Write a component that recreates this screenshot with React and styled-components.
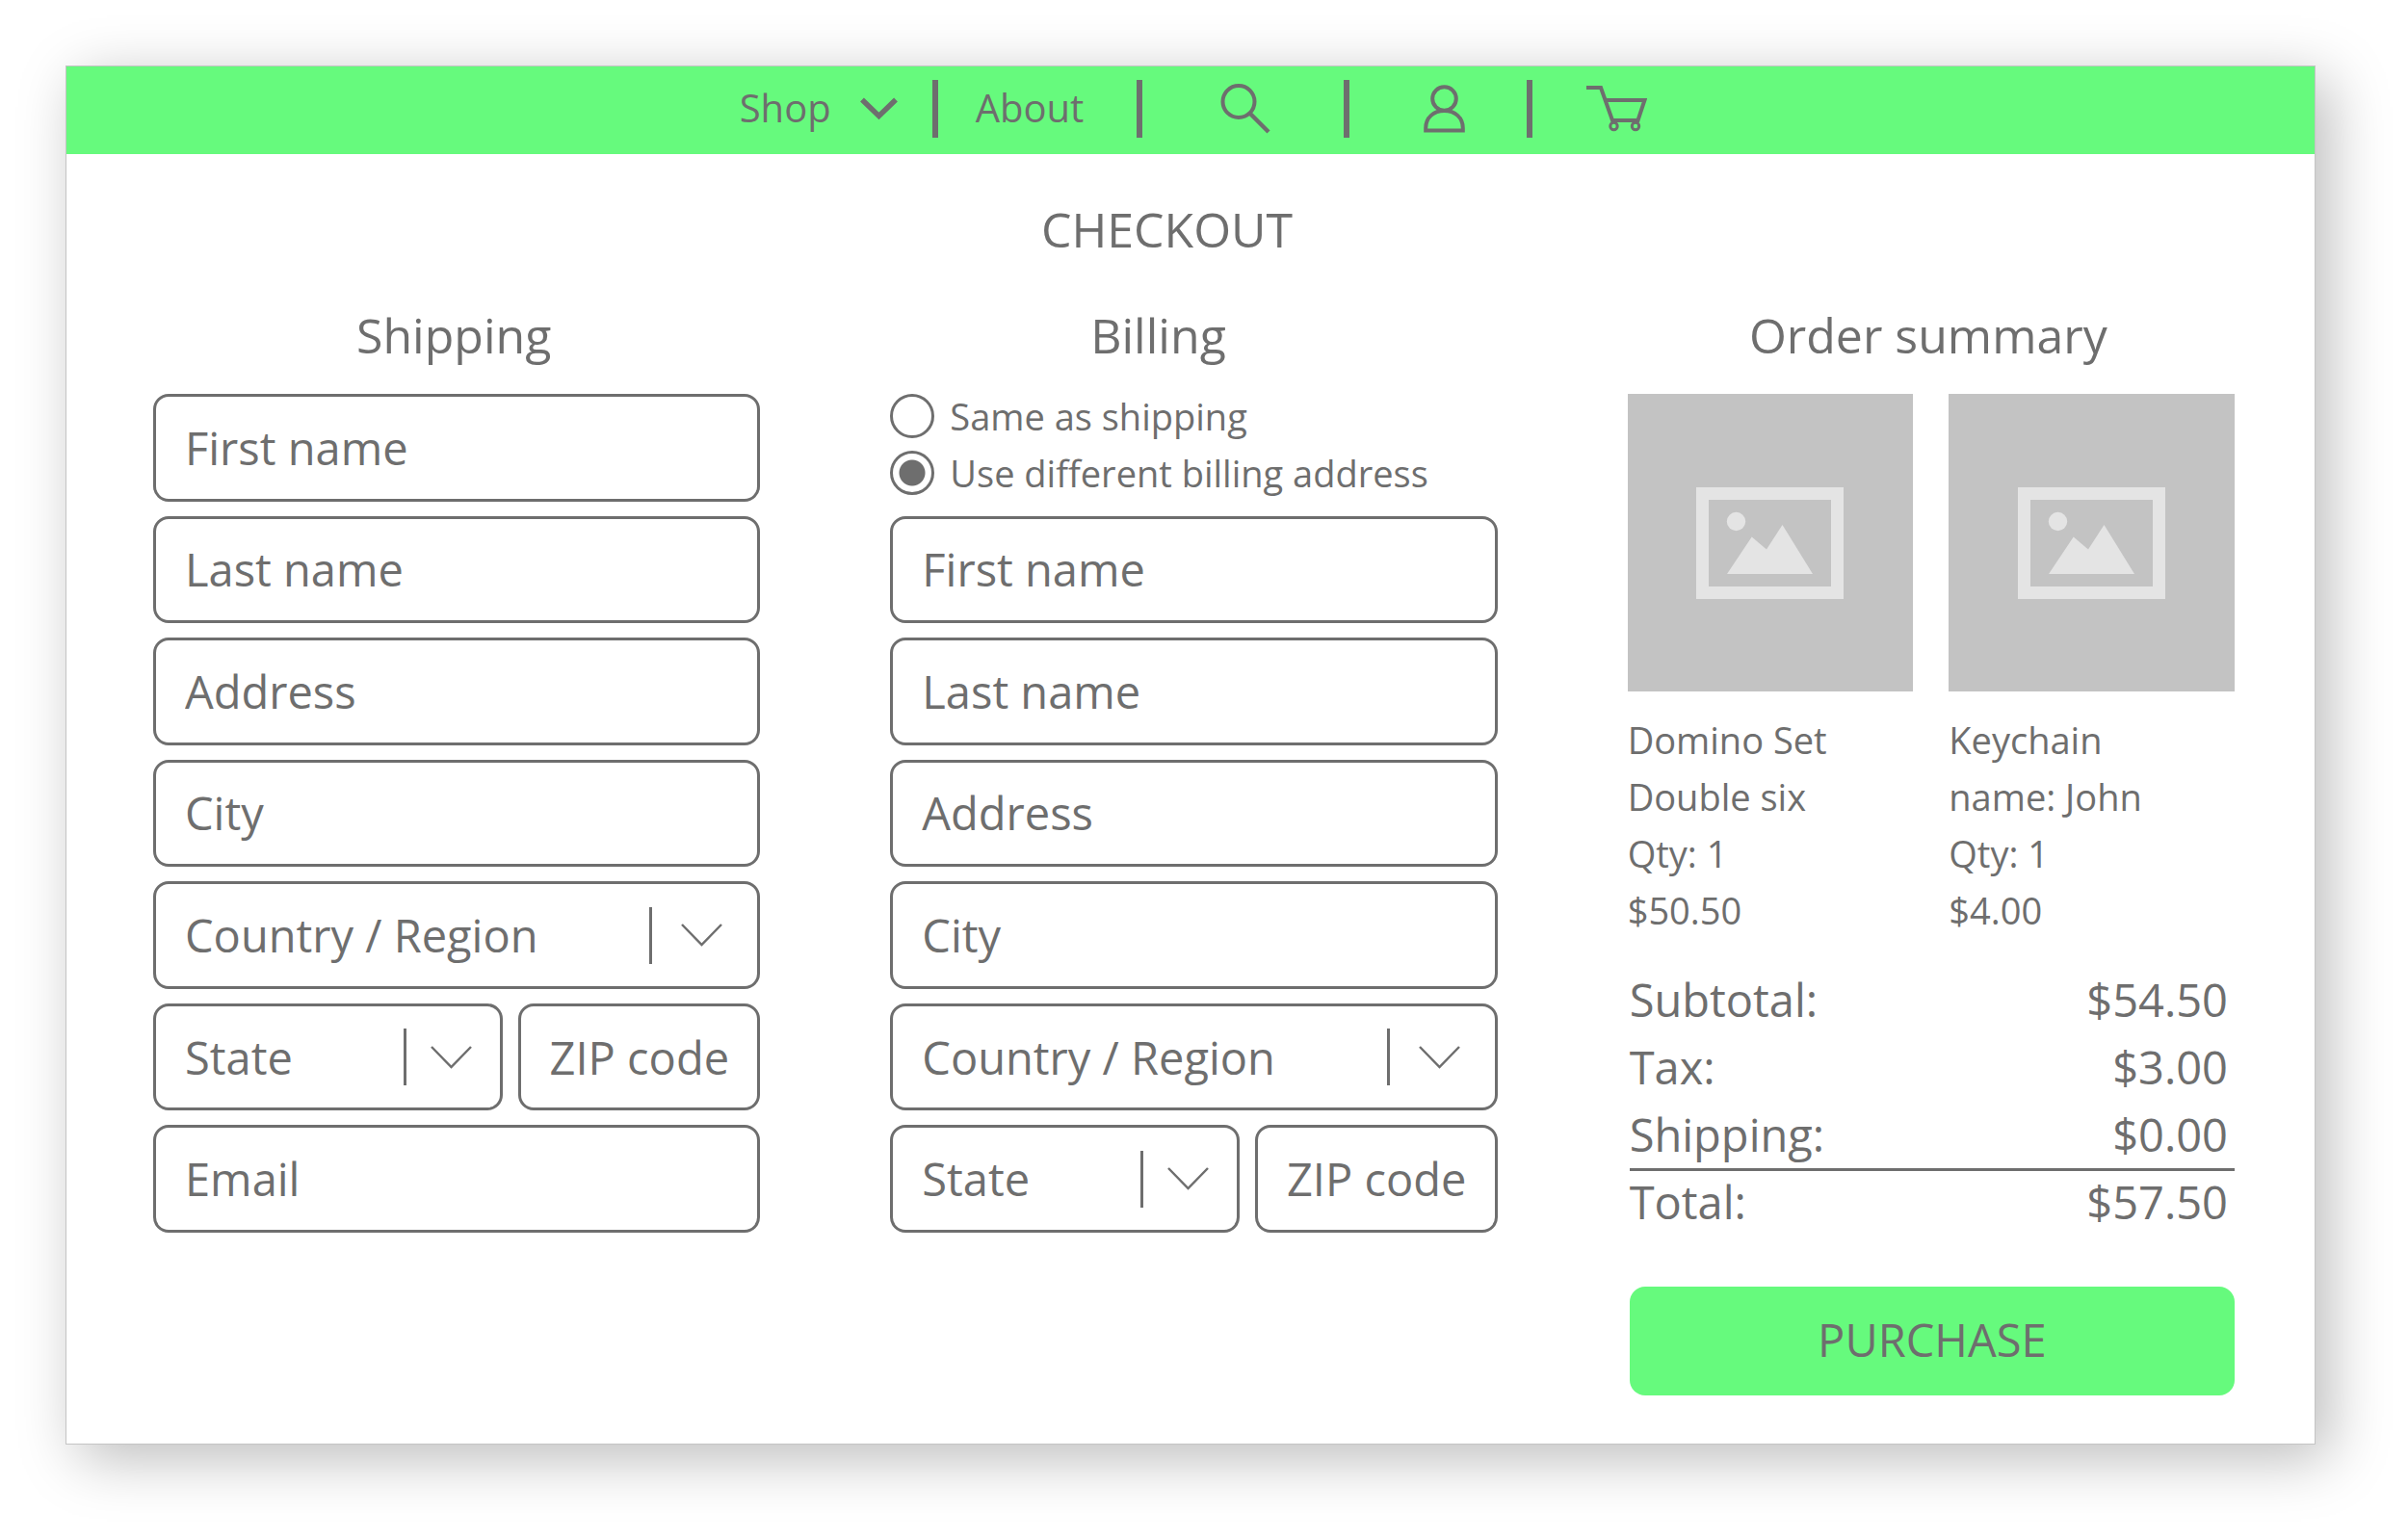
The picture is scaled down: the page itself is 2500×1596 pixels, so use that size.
import React from "react";
import styled, { createGlobalStyle } from "styled-components";

const GREY = "#6e6e6e";
const GREEN = "#66fa7d";

const items = [
  { lines: ["Domino Set", "Double six"], qty: 1, price: "$50.50" },
  { lines: ["Keychain", "name: John"], qty: 1, price: "$4.00" },
];

const SelectField = ({ label, tight }) => (
  <SelectBox $tight={tight}>
    <select aria-label={label} defaultValue="">
      <option value="">{label}</option>
    </select>
    <span />
    <svg width="43" height="24" viewBox="0 0 43 24" aria-hidden="true">
      <path d="M1 1 L21.5 22 L42 1" fill="none" stroke={GREY} strokeWidth="2.5" />
    </svg>
  </SelectBox>
);

const AddressFields = () => (
  <>
    <Field placeholder="First name" aria-label="First name" />
    <Field placeholder="Last name" aria-label="Last name" />
    <Field placeholder="Address" aria-label="Address" />
    <Field placeholder="City" aria-label="City" />
    <SelectField label="Country / Region" />
    <StateRow>
      <SelectField label="State" tight />
      <Field placeholder="ZIP code" aria-label="ZIP code" />
    </StateRow>
  </>
);

const Navbar = () => (
  <Nav>
    <NavButton $left={0} $right={36}>
      <span>Shop</span>
      <svg width="39" height="24" viewBox="0 0 39 24" aria-hidden="true">
        <path d="M2 2.5 L19.5 19.5 L37 2.5" fill="none" stroke={GREY} strokeWidth="5.5" />
      </svg>
    </NavButton>
    <Divider />
    <NavLink href="#about" $left={39} $right={55}>
      <span>About</span>
    </NavLink>
    <Divider />
    <NavButton $left={81} $right={76} aria-label="Search">
      <svg width="52" height="52" viewBox="0 0 52 52">
        <g fill="none" stroke={GREY} strokeWidth="4">
          <circle cx="19" cy="18.5" r="16.5" />
          <path d="M30.5 30.5 L50 50" strokeWidth="4.5" />
        </g>
      </svg>
    </NavButton>
    <Divider />
    <NavLink href="#account" $left={77} $right={64} aria-label="Account">
      <svg width="43" height="50" viewBox="0 0 43 50">
        <g fill="none" stroke={GREY} strokeWidth="4">
          <circle cx="21.5" cy="14.5" r="12.3" />
          <path d="M2.2 47.5 V45 C2.2 34 10.5 27 21.5 27 C32.5 27 40.8 34 40.8 45 V47.5 Z" />
        </g>
      </svg>
    </NavLink>
    <Divider />
    <NavLink href="#cart" $left={56} $right={0} aria-label="Cart">
      <svg width="63" height="50" viewBox="0 0 63 50">
        <g fill="none" stroke={GREY} strokeWidth="4">
          <path d="M0 3 H15 L27 37 H53.5 L60.5 16 H20" />
          <circle cx="28.5" cy="43" r="3.7" strokeWidth="3" />
          <circle cx="51" cy="43" r="3.7" strokeWidth="3" />
        </g>
      </svg>
    </NavLink>
  </Nav>
);

const App = () => {
  return (
    <>
      <GlobalStyle />
      <Page>
        <Frame>
          <Navbar />
          <Main>
            <PageTitle>CHECKOUT</PageTitle>
            <Columns>
              <section>
                <Title>Shipping</Title>
                <Fields>
                  <AddressFields />
                  <Field type="email" placeholder="Email" aria-label="Email" />
                </Fields>
              </section>

              <section>
                <Title $inset={74}>Billing</Title>
                <Fields>
                  <Choices>
                    <Choice>
                      <input type="radio" name="billing" />
                      Same as shipping
                    </Choice>
                    <Choice>
                      <input type="radio" name="billing" defaultChecked />
                      Use different billing address
                    </Choice>
                  </Choices>
                  <AddressFields />
                </Fields>
              </section>

              <section>
                <Title>Order summary</Title>
                <Items>
                  {items.map((item) => (
                    <li key={item.price}>
                      <Thumb>
                        <svg width="153" height="116" viewBox="0 0 153 116" aria-hidden="true">
                          <rect x="6.5" y="6.5" width="140" height="103" fill="none" stroke="#e4e4e4" strokeWidth="13" />
                          <circle cx="41.5" cy="35.5" r="9.7" fill="#e4e4e4" />
                          <path d="M32 90 L57.7 51.5 L73 64.5 L89.5 39 L121 90 Z" fill="#e4e4e4" />
                        </svg>
                      </Thumb>
                      {item.lines.map((line) => (
                        <p key={line}>{line}</p>
                      ))}
                      <p>Qty: {item.qty}</p>
                      <p>{item.price}</p>
                    </li>
                  ))}
                </Items>
                <Payment>
                  <Totals>
                    <tbody>
                      <tr>
                        <th scope="row">Subtotal:</th>
                        <td>$54.50</td>
                      </tr>
                      <tr>
                        <th scope="row">Tax:</th>
                        <td>$3.00</td>
                      </tr>
                      <tr>
                        <th scope="row">Shipping:</th>
                        <td>$0.00</td>
                      </tr>
                    </tbody>
                    <tfoot>
                      <tr>
                        <th scope="row">Total:</th>
                        <td>$57.50</td>
                      </tr>
                    </tfoot>
                  </Totals>
                  <Purchase type="button">PURCHASE</Purchase>
                </Payment>
              </section>
            </Columns>
          </Main>
        </Frame>
      </Page>
    </>
  );
};

const GlobalStyle = createGlobalStyle`
  * {
    box-sizing: border-box;
  }

  body {
    margin: 0;
    background: #fff;
  }

  body, button, input, select {
    font-family: "Open Sans", "Noto Sans", sans-serif;
    color: ${GREY};
  }

  svg {
    display: block;
    flex: none;
  }
`;

const Page = styled.div`
  display: flex;
  min-height: 100vh;
  padding: 68px 96px 96px 68px;
`;

const Frame = styled.div`
  flex: 1;
  min-width: 0;
  background: #fff;
  border: 1px solid #c4c4c4;
  box-shadow: 14px 14px 58px rgba(0, 0, 0, 0.27);
`;

const Nav = styled.nav`
  display: flex;
  align-items: center;
  justify-content: center;
  height: 91px;
  padding: 0 0 3px 6px;
  background: ${GREEN};
`;

const NavLink = styled.a`
  display: flex;
  align-items: center;
  gap: 30px;
  padding: 0 ${(p) => p.$right}px 0 ${(p) => p.$left}px;
  border: 0;
  background: none;
  color: ${GREY};
  font-size: 40px;
  line-height: 48px;
  text-decoration: none;
  cursor: pointer;

  span {
    padding-bottom: 2px;
  }
`;

const NavButton = styled(NavLink).attrs({ as: "button", type: "button" })``;

const Divider = styled.span`
  width: 6px;
  height: 60px;
  background: ${GREY};
`;

const Main = styled.main`
  padding: 44px 83px 48px 90px;
`;

const PageTitle = styled.h1`
  margin: 0 0 42px;
  padding-right: 56px;
  font-size: 50px;
  font-weight: 400;
  line-height: 68px;
  text-align: center;
`;

const Columns = styled.div`
  display: grid;
  grid-template-columns: repeat(3, minmax(0, 1fr));
  gap: 135px;
`;

const Title = styled.h2`
  margin: 0 0 27px;
  padding-right: ${(p) => p.$inset || 6}px;
  font-size: 50px;
  font-weight: 400;
  line-height: 68px;
  text-align: center;
`;

const Fields = styled.form`
  display: grid;
  grid-template-rows: repeat(7, 1fr);
  gap: 15px;
  min-height: 871px;
`;

const Field = styled.input`
  width: 100%;
  min-width: 0;
  padding: 0 0 0 30px;
  border: 3px solid ${GREY};
  border-radius: 16px;
  background: #fff;
  font-size: 47px;

  &::placeholder {
    color: ${GREY};
    opacity: 1;
  }
`;

const SelectBox = styled.div`
  display: flex;
  align-items: center;
  min-width: 0;
  padding: 0 ${(p) => (p.$tight ? 29 : 36)}px 0 30px;
  border: 3px solid ${GREY};
  border-radius: 16px;

  select {
    flex: 1;
    min-width: 0;
    padding: 0;
    border: 0;
    appearance: none;
    background: none;
    font-size: 47px;
  }

  span {
    width: 3px;
    height: 59px;
    margin-right: ${(p) => (p.$tight ? 25 : 30)}px;
    background: ${GREY};
  }
`;

const StateRow = styled.div`
  display: grid;
  grid-template-columns: minmax(0, 363fr) minmax(0, 252fr);
  gap: 16px;
`;

const Choices = styled.div`
  display: flex;
  flex-direction: column;
  gap: 13px;
`;

const Choice = styled.label`
  display: flex;
  align-items: center;
  gap: 16px;
  font-size: 38px;
  line-height: 46px;

  input {
    flex: none;
    width: 46px;
    height: 46px;
    margin: 0;
    appearance: none;
    border: 3px solid ${GREY};
    border-radius: 50%;
  }

  input:checked {
    background: radial-gradient(circle, ${GREY} 13px, transparent 14px);
  }
`;

const Items = styled.ul`
  display: grid;
  grid-template-columns: 1fr 1fr;
  gap: 37px;
  margin: 0;
  padding: 0;
  list-style: none;
  font-size: 38px;
  line-height: 59px;

  p {
    margin: 0;
  }
`;

const Thumb = styled.div`
  display: flex;
  align-items: center;
  justify-content: center;
  height: 309px;
  margin-bottom: 21px;
  background: #c3c3c3;
`;

const Payment = styled.div`
  padding-left: 2px;
`;

const Totals = styled.table`
  width: 100%;
  margin: 28px 0 56px;
  border-collapse: collapse;
  font-size: 47px;
  line-height: 70px;

  th,
  td {
    padding: 0;
    font-weight: 400;
    text-align: left;
  }

  td {
    padding-right: 7px;
    text-align: right;
  }

  tfoot tr {
    border-top: 3px solid ${GREY};
    line-height: 64px;
  }
`;

const Purchase = styled.button`
  width: 100%;
  height: 113px;
  padding: 0 0 4px;
  border: 0;
  border-radius: 16px;
  background: ${GREEN};
  font-size: 47px;
  cursor: pointer;
`;

export default App;
